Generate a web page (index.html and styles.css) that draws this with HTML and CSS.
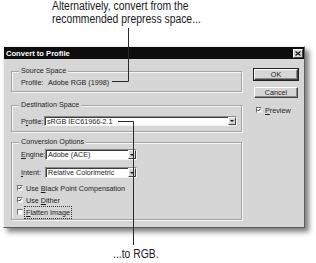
FILE: index.html
```html
<html>
    <head>
        <link rel="stylesheet" href="styles.css">
    </head>
    <body>
        <div class="page">
            <p class="note note-top"><span class="squeeze">Alternatively, convert from the<br>recommended prepress space...</span></p>

            <div class="dialog">
                <div class="titlebar">
                    <span class="title">Convert to Profile</span>
                    <span class="close">
                        <svg width="6" height="5" viewBox="0 0 6 5"><path d="M0.5 0.5L5.5 4.5M5.5 0.5L0.5 4.5" stroke="#111" stroke-width="1.1"/></svg>
                    </span>
                </div>

                <div class="dialog-body">
                    <div class="groups">
                        <div class="group group-source">
                            <span class="legend">Source Space</span>
                            <div class="row row-source">
                                <span class="label label-source">Profile:</span>
                                <span>Adobe RGB (1998)</span>
                            </div>
                        </div>

                        <div class="group group-dest">
                            <span class="legend">Destination Space</span>
                            <div class="row row-dest">
                                <span class="label label-dest">P<u>r</u>ofile:</span>
                                <div class="select select-wide">
                                    <span class="value">sRGB IEC61966-2.1</span>
                                    <span class="arrow"></span>
                                </div>
                            </div>
                        </div>

                        <div class="group group-options">
                            <span class="legend">Conversion Options</span>
                            <div class="row row-engine">
                                <span class="label label-opt"><u>E</u>ngine:</span>
                                <div class="select select-small">
                                    <span class="value">Adobe (ACE)</span>
                                    <span class="arrow"></span>
                                </div>
                            </div>
                            <div class="row row-intent">
                                <span class="label label-opt"><u>I</u>ntent:</span>
                                <div class="select select-small">
                                    <span class="value">Relative Colorimetric</span>
                                    <span class="arrow"></span>
                                </div>
                            </div>
                            <div class="checks">
                                <div class="check"><span class="box checked"></span><span>Use <u>B</u>lack Point Compensation</span></div>
                                <div class="check"><span class="box checked"></span><span>Use <u>D</u>ither</span></div>
                                <div class="check"><span class="box"></span><span class="focus"><u>F</u>latten Image</span></div>
                            </div>
                        </div>
                    </div>

                    <div class="side">
                        <div class="button default">OK</div>
                        <div class="button">Cancel</div>
                        <div class="check check-preview"><span class="box checked"></span><span><u>P</u>review</span></div>
                    </div>
                </div>
            </div>

            <p class="note note-bottom"><span class="squeeze">...to RGB.</span></p>

            <svg class="leaders" width="316" height="263" viewBox="0 0 316 263">
                <path d="M112 81.5H128.5V28" fill="none" stroke="#2b2b2b"/>
                <path d="M118 121.5H133.5V245" fill="none" stroke="#2b2b2b"/>
            </svg>
        </div>
    </body>
</html>
```

FILE: styles.css
```css
*
{
    box-sizing: border-box;
}

body
{
    margin: 0;
    background: #fff;
    font-family: "Liberation Sans", Arial, sans-serif;
}

.page
{
    position: relative;
    width: 316px;
    height: 263px;
    overflow: hidden;
}

.note
{
    margin: 0;
    font-family: "Liberation Sans", Arial, sans-serif;
    font-size: 12.5px;
    line-height: 13px;
    color: #1a1a1a;
}

/* the callouts are set in a condensed face */
.squeeze
{
    display: inline-block;
    transform: scaleX(0.83);
    transform-origin: left top;
    white-space: nowrap;
}

.note-top
{
    height: 27px;
    padding: 0 0 0 52px;
}

.note-bottom
{
    margin-top: 20px;
    padding-left: 113px;
}

.leaders
{
    position: absolute;
    left: 0;
    top: 0;
    pointer-events: none;
}

.dialog
{
    margin: 19px 0 0 3px;
    width: 302px;
    height: 182px;
    background: #d6d6d6;
    border: 1px solid;
    border-color: #f2f2f2 #5c5c5c #5c5c5c #f2f2f2;
    box-shadow: 4px 4px 5px rgba(0, 0, 0, 0.5);
    font-size: 7.2px;
    color: #1e1e1e;
}

.titlebar
{
    display: flex;
    align-items: center;
    justify-content: space-between;
    height: 12px;
    padding: 0 1px 0 2px;
    background: #0d0d0d;
    color: #fff;
    font-weight: bold;
    font-size: 7.6px;
}

.close
{
    display: flex;
    align-items: center;
    justify-content: center;
    width: 10px;
    height: 9px;
    background: #d6d6d6;
    border: 1px solid;
    border-color: #fff #404040 #404040 #fff;
}

.dialog-body
{
    display: flex;
    padding: 10px 6px 0 7px;
}

.groups
{
    width: 231px;
    margin-top: 2px;
}

.group
{
    border: 1px solid #a4a4a4;
    box-shadow: inset 1px 1px 0 #f4f4f4, 1px 1px 0 #f4f4f4;
    padding-left: 9px;
}

.legend
{
    display: block;
    width: max-content;
    height: 10px;
    line-height: 10px;
    margin: -6px 0 0 -2px;
    padding: 0 2px;
    background: #d6d6d6;
}

.group-source
{
    height: 21px;
}

.group-dest
{
    height: 27px;
    margin-top: 13px;
}

.group-options
{
    height: 78px;
    margin-top: 10px;
}

.row
{
    display: flex;
    align-items: center;
    height: 10px;
}

.row-source
{
    margin-top: 1px;
}

.row-dest
{
    margin-top: 6px;
}

.row-engine
{
    height: 11px;
    margin-top: 2px;
}

.row-intent
{
    height: 11px;
    margin-top: 7px;
}

.label-source
{
    width: 27px;
}

.label-dest
{
    width: 23px;
}

.label-opt
{
    width: 24px;
}

.select
{
    display: flex;
    align-items: center;
    height: 100%;
    padding-left: 2px;
    background: #fff;
    border: 1px solid;
    border-color: #8a8a8a #f4f4f4 #f4f4f4 #8a8a8a;
    box-shadow: inset 1px 1px 0 #3c3c3c;
}

.select-wide
{
    width: 193px;
}

.select-small
{
    width: 92px;
}

.arrow
{
    display: flex;
    align-items: center;
    justify-content: center;
    margin-left: auto;
    width: 8px;
    height: 100%;
    background: #d6d6d6;
    border: 1px solid;
    border-color: #fff #404040 #404040 #fff;
}

.arrow::after
{
    content: "";
    border-left: 2px solid transparent;
    border-right: 2px solid transparent;
    border-top: 2px solid #111;
}

.checks
{
    margin: 4px 0 0 -4px;
}

.check
{
    display: flex;
    align-items: center;
    height: 12px;
}

.box
{
    width: 6px;
    height: 6px;
    margin-right: 3px;
    background: #fff;
    border: 1px solid;
    border-color: #707070 #e8e8e8 #e8e8e8 #707070;
}

.box.checked
{
    background: #fff url("data:image/svg+xml,%3Csvg xmlns='http://www.w3.org/2000/svg' width='4' height='4' viewBox='0 0 4 4'%3E%3Cpath d='M0.3 1.8L1.5 3L3.7 0.6' fill='none' stroke='%23111' stroke-width='1'/%3E%3C/svg%3E") center / 4px 4px no-repeat;
}

.focus
{
    outline: 1px dotted #333;
    outline-offset: 1px;
}

.side
{
    width: 44px;
    margin-left: 12px;
}

.button
{
    height: 11px;
    line-height: 9px;
    text-align: center;
    background: #d6d6d6;
    border: 1px solid;
    border-color: #fff #404040 #404040 #fff;
    box-shadow: inset -1px -1px 0 #8a8a8a;
}

.button + .button
{
    margin-top: 7px;
}

.default
{
    outline: 1px solid #222;
}

.check-preview
{
    margin: 6px 0 0 2px;
}
```
